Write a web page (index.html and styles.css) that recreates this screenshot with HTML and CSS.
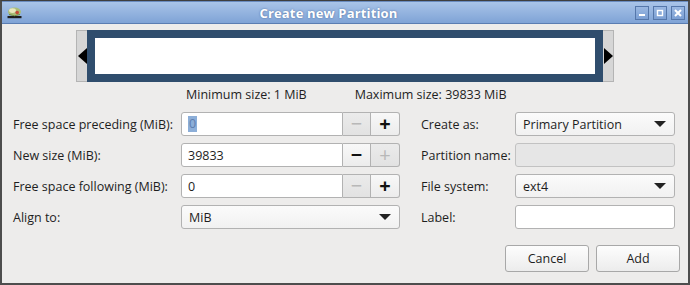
FILE: index.html
```html
<!DOCTYPE html>
<html>
<head>
<meta charset="utf-8">
<link rel="stylesheet" href="styles.css">
</head>
<body>
<div class="window">
  <div class="titlebar">
    <svg class="app-icon" width="15" height="13" viewBox="0 0 15 13">
      <rect x="0.5" y="10" width="14" height="2.2" fill="#1d1d1d"/>
      <ellipse cx="7.5" cy="5.8" rx="6.5" ry="4.3" fill="#a9bd78"/>
      <ellipse cx="5.5" cy="4.6" rx="3.4" ry="2.4" fill="#e9e7bd"/>
      <circle cx="10.2" cy="6.6" r="1.8" fill="#c44a3a"/>
      <path d="M2 8.5 Q7.5 11 13 8.5" stroke="#6f8a45" stroke-width="1" fill="none"/>
    </svg>
    <span class="title">Create new Partition</span>
    <div class="wm-buttons">
      <span class="wm-btn"><svg width="8" height="8" viewBox="0 0 8 8"><rect x="1" y="5" width="6" height="2" fill="#fff"/></svg></span>
      <span class="wm-btn"><svg width="8" height="8" viewBox="0 0 8 8"><rect x="1.5" y="1.5" width="5" height="5" fill="none" stroke="#fff" stroke-width="1.4"/></svg></span>
      <span class="wm-btn"><svg width="8" height="8" viewBox="0 0 8 8"><path d="M1 1L7 7M7 1L1 7" stroke="#fff" stroke-width="2"/></svg></span>
    </div>
  </div>
  <div class="body">
    <div class="partbar">
      <div class="handle handle-left"><span class="arrow-left"></span></div>
      <div class="part"><div class="part-inner"></div></div>
      <div class="handle handle-right"><span class="arrow-right"></span></div>
    </div>
    <div class="sizes">
      <span>Minimum size: 1 MiB</span>
      <span>Maximum size: 39833 MiB</span>
    </div>
    <div class="form">
      <label class="lbl">Free space preceding (MiB):</label>
      <div class="spin">
        <div class="spin-entry"><span class="sel">0</span></div>
        <div class="spin-btn disabled">&#8722;</div>
        <div class="spin-btn">+</div>
      </div>
      <label class="lbl rlbl">Create as:</label>
      <div class="combo"><span>Primary Partition</span><span class="caret"></span></div>

      <label class="lbl">New size (MiB):</label>
      <div class="spin">
        <div class="spin-entry">39833</div>
        <div class="spin-btn">&#8722;</div>
        <div class="spin-btn disabled">+</div>
      </div>
      <label class="lbl rlbl">Partition name:</label>
      <div class="entry entry-disabled"></div>

      <label class="lbl">Free space following (MiB):</label>
      <div class="spin">
        <div class="spin-entry">0</div>
        <div class="spin-btn disabled">&#8722;</div>
        <div class="spin-btn">+</div>
      </div>
      <label class="lbl rlbl">File system:</label>
      <div class="combo"><span>ext4</span><span class="caret"></span></div>

      <label class="lbl">Align to:</label>
      <div class="combo"><span>MiB</span><span class="caret"></span></div>
      <label class="lbl rlbl">Label:</label>
      <div class="entry"></div>
    </div>
    <div class="actions">
      <button class="btn">Cancel</button>
      <button class="btn">Add</button>
    </div>
  </div>
</div>
</body>
</html>
```

FILE: styles.css
```css
* { box-sizing: border-box; }
html, body { margin: 0; padding: 0; }
body {
  width: 690px;
  height: 285px;
  overflow: hidden;
  font-family: "Open Sans", "Noto Sans", sans-serif;
  font-size: 12.5px;
  color: #1e1e1e;
}
.window {
  width: 690px;
  height: 285px;
  background: #edeceb;
  border: 2px solid #4d4d4d;
  border-top: 1px solid #3e3e3e;
  display: flex;
  flex-direction: column;
}
.titlebar {
  height: 23px;
  flex: none;
  display: flex;
  align-items: center;
  background: linear-gradient(#a9c4e8, #7fa3d6);
  border-bottom: 1px solid #5a7db2;
  border-top: 1px solid #6a8cc0;
}
.app-icon { margin-left: 5px; flex: none; }
.title {
  flex: 1;
  text-align: center;
  font-weight: bold;
  color: #fff;
  font-size: 13px;
  letter-spacing: 0.15px;
  text-shadow: 0 0 2px #4a6a9a;
  line-height: 20px;
}
.wm-buttons {
  margin-right: 3px;
  display: flex;
  gap: 4px;
  flex: none;
}
.wm-btn {
  width: 14px;
  height: 14px;
  border: 1px solid #5577aa;
  background: linear-gradient(#9ab8e2, #7b9fd3);
  display: flex;
  align-items: center;
  justify-content: center;
}
.body {
  flex: 1;
  padding: 6px 10px 0 11px;
  display: flex;
  flex-direction: column;
}
.partbar {
  display: flex;
  margin-left: 63px;
  height: 52px;
}
.handle {
  width: 11px;
  background: #d6d6d6;
  border: 1px solid #b4b4b4;
  display: flex;
  align-items: center;
}
.handle-left { border-right: none; }
.handle-right { border-left: none; justify-content: flex-end; }
.arrow-left {
  width: 0; height: 0;
  border-top: 8px solid transparent;
  border-bottom: 8px solid transparent;
  border-right: 9px solid #000;
  margin-left: 1px;
}
.arrow-right {
  width: 0; height: 0;
  border-top: 8px solid transparent;
  border-bottom: 8px solid transparent;
  border-left: 9px solid #000;
}
.part {
  width: 516px;
  background: #2f4d6d;
  padding: 8px;
}
.part-inner {
  width: 100%;
  height: 100%;
  background: #fff;
}
.sizes {
  display: flex;
  gap: 48px;
  margin-left: 173px;
  margin-top: 3px;
  height: 19px;
  align-items: center;
}
.form {
  margin-top: 8px;
  display: grid;
  grid-template-columns: 168px 219px 115px 160px;
  grid-auto-rows: 24px;
  row-gap: 7px;
  align-items: center;
}
.rlbl { padding-left: 21px; }
.spin {
  display: flex;
  height: 24px;
}
.spin-entry {
  flex: 1;
  background: #fff;
  border: 1px solid #b2b2b2;
  border-radius: 3px 0 0 3px;
  padding-left: 6px;
  display: flex;
  align-items: center;
}
.sel {
  background: #8caed8;
  color: #5e7fb0;
  padding: 0 1px;
  line-height: 16px;
}
.spin-btn {
  width: 28px;
  border: 1px solid #b2b2b2;
  border-left: none;
  background: linear-gradient(#f8f8f8, #ececec);
  display: flex;
  align-items: center;
  justify-content: center;
  font-size: 20px;
  font-weight: bold;
  color: #111;
  line-height: 1;
}
.spin-btn:last-child { border-radius: 0 3px 3px 0; width: 29px; }
.spin-btn.disabled {
  background: linear-gradient(#ebebeb, #e2e2e2);
  color: #b8b8b8;
  font-weight: normal;
}
.combo {
  height: 24px;
  border: 1px solid #b2b2b2;
  border-radius: 3px;
  background: linear-gradient(#fbfbfb, #f1f1f1);
  display: flex;
  align-items: center;
  padding: 0 8px 0 7px;
}
.caret {
  margin-left: auto;
  width: 0; height: 0;
  border-left: 6px solid transparent;
  border-right: 6px solid transparent;
  border-top: 6px solid #222;
}
.entry {
  height: 24px;
  border: 1px solid #b2b2b2;
  border-radius: 3px;
  background: #fff;
}
.entry-disabled {
  background: #e6e6e6;
  border-color: #c2c2c2;
}
.actions {
  display: flex;
  justify-content: flex-end;
  gap: 7px;
  margin-top: 16px;
  margin-right: -2px;
}
.btn {
  width: 84px;
  height: 27px;
  font-family: inherit;
  font-size: 12.5px;
  color: #1e1e1e;
  border: 1px solid #a8a8a8;
  border-radius: 3px;
  background: linear-gradient(#fdfdfd, #ececec);
  padding: 0;
}
```
